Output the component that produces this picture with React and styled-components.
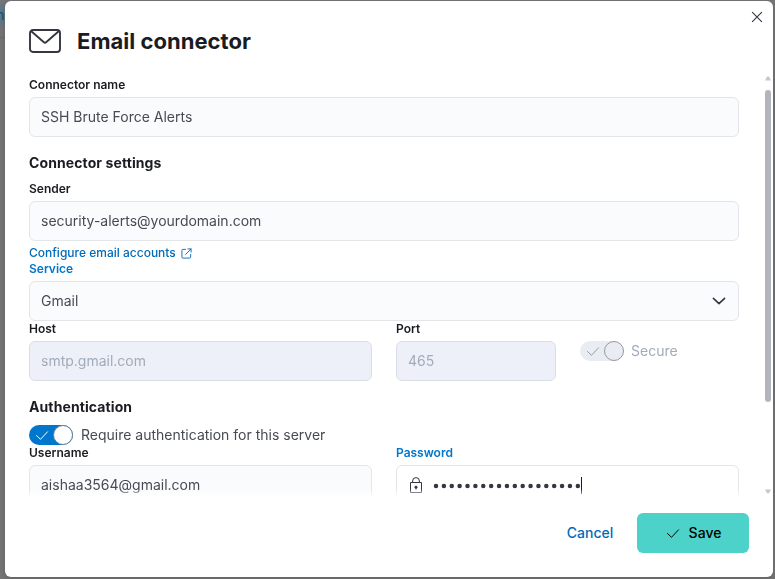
import React from 'react';
import styled, { createGlobalStyle } from 'styled-components';

const GlobalStyle = createGlobalStyle`
  * { box-sizing: border-box; }
  body {
    margin: 0;
    overflow: hidden;
    font-family: Inter, "Liberation Sans", sans-serif;
    font-size: 14px;
    color: #343741;
    background: #777778;
  }
  button, input { font: inherit; }
  h1, h2 { margin: 0; color: #1a1c21; font-weight: 700; }
`;

const Backdrop = styled.div`
  position: relative;
  width: 775px;
  height: 579px;
  padding: 1px 2px 2px 5px;
  background: #777778;
  overflow: hidden;
`;

const PageBehind = styled.div`
  position: absolute;
  left: 0;
  top: 4px;
  width: 12px;
  height: 34px;
  border-bottom: 1px solid #6c6e74;
  color: #165885;
  font-size: 14px;
  font-weight: 500;
  line-height: 21px;
  text-indent: -4px;
  background: linear-gradient(#667985 0 22px, #777778 22px);
`;

const Modal = styled.section`
  position: relative;
  display: flex;
  flex-direction: column;
  width: 768px;
  height: 576px;
  background: #fff;
  border-radius: 6px;
  box-shadow: 0 2px 8px rgba(0, 0, 0, 0.2);
`;

const Header = styled.header`
  display: flex;
  align-items: center;
  gap: 16px;
  height: 68px;
  padding: 12px 24px 0;
`;

const Title = styled.h1`
  font-size: 22px;
  line-height: 32px;
  letter-spacing: 0.03px;
`;

const CloseButton = styled.button`
  position: absolute;
  top: 4px;
  right: 4px;
  display: grid;
  place-items: center;
  width: 24px;
  height: 24px;
  padding: 0;
  border: 0;
  background: none;
  color: #343741;
`;

const Body = styled.div`
  display: flex;
  height: 428px;
`;

const Fields = styled.div`
  flex: 1;
  height: 428px;
  padding: 8px 0 0 24px;
  overflow: hidden;
  mask-image: linear-gradient(rgba(0,0,0,.1) 0, #000 7px, #000 calc(100% - 8px), rgba(0,0,0,.1) 100%);
`;

const ScrollTrack = styled.div`
  display: flex;
  flex-direction: column;
  align-items: center;
  width: 9px;
  height: 419px;
  margin: 7px 1px 0 24px;
`;

const ScrollThumb = styled.div`
  width: 6px;
  height: 312px;
  margin: 9px 0 87px;
  border-radius: 3px;
  background: #b2b5be;
`;

const Row = styled.div`
  display: flex;
  gap: 24px;
  width: 710px;
`;

const Field = styled.div`
  width: ${({ $width }) => $width || '710px'};
`;

const Label = styled.label`
  display: block;
  height: 16px;
  margin-bottom: 4px;
  font-size: 12px;
  font-weight: 600;
  line-height: 16px;
  color: ${({ $focused }) => ($focused ? '#0077cc' : '#1a1c21')};
`;

const Control = styled.div`
  display: flex;
  align-items: center;
  height: 40px;
  padding: 0 11px;
  border: 1px solid ${({ $disabled }) => ($disabled ? '#d9dde5' : '#e3e5e9')};
  border-radius: 6px;
  background: ${({ $disabled, $focused }) => ($disabled ? '#edf0f8' : $focused ? '#fff' : '#fafbfd')};
  color: ${({ $disabled }) => ($disabled ? '#a2abba' : '#474a53')};
  line-height: 20px;
`;

const Value = styled.span`
  flex: 1;
`;

const SectionTitle = styled.h2`
  height: 20px;
  margin: 16px 0 8px;
  font-size: 14px;
  line-height: 20px;
  letter-spacing: 0.1px;
`;

const HelpLink = styled.a`
  display: flex;
  align-items: center;
  gap: 5px;
  height: 16px;
  margin-top: 4px;
  color: #006bb8;
  font-size: 12px;
  font-weight: 500;
  line-height: 16px;
`;

const SwitchRow = styled.div`
  display: flex;
  align-items: center;
  gap: ${({ $disabled }) => ($disabled ? 7 : 8)}px;
  height: 20px;
  margin-top: ${({ $offset }) => $offset || 0}px;
  color: ${({ $disabled }) => ($disabled ? '#a2abba' : '#474a53')};
  line-height: 20px;
`;

const SwitchTrack = styled.span`
  display: flex;
  align-items: center;
  justify-content: space-between;
  width: 44px;
  height: 20px;
  padding-left: 5px;
  border-radius: 10px;
  color: ${({ $disabled }) => ($disabled ? '#9a9da4' : '#fff')};
  background: ${({ $disabled }) => ($disabled ? '#e9ecf3' : '#0077cc')};
`;

const SwitchThumb = styled.span`
  width: 20px;
  height: 20px;
  border: 1px solid ${({ $disabled }) => ($disabled ? '#98999d' : '#6e8298')};
  border-radius: 50%;
  background: ${({ $disabled }) => ($disabled ? '#e9ecf3' : '#fff')};
`;

const PasswordValue = styled.span`
  display: flex;
  align-items: center;
  margin-left: 9px;
  color: #343741;
`;

const Caret = styled.span`
  width: 1px;
  height: 17px;
  background: #1a1c21;
`;

const Footer = styled.footer`
  display: flex;
  justify-content: flex-end;
  align-items: center;
  height: 80px;
  padding: 0 24px 8px;
`;

const Button = styled.button`
  display: flex;
  align-items: center;
  justify-content: center;
  gap: 8px;
  height: 40px;
  border: 0;
  border-radius: 6px;
  padding: 0 0 1px;
  width: ${({ $primary }) => ($primary ? '112px' : '94px')};
  background: ${({ $primary }) => ($primary ? '#4dd2ca' : 'transparent')};
  color: ${({ $primary }) => ($primary ? '#000' : '#006bb8')};
  font-weight: 500;
  line-height: 19px;
`;

const CheckIcon = () => (
  <svg width="16" height="16" viewBox="0 0 16 16" fill="none" stroke="currentColor" strokeLinecap="round" strokeLinejoin="round">
    <path d="M2.5 8.5l4 3.8 7-7.5" />
  </svg>
);

const EmailIcon = () => (
  <svg width="32" height="24" viewBox="0 0 32 24" fill="none" stroke="#343741" strokeWidth="1.9">
    <rect x="1" y="1" width="30" height="22" rx="3" />
    <path d="M2 2l12.9 11.2q1.1 1 2.2 0L30 2" strokeLinejoin="round" />
  </svg>
);

const CloseIcon = () => (
  <svg width="16" height="16" viewBox="0 0 16 16" stroke="currentColor" strokeWidth="1.1" strokeLinecap="round">
    <path d="M3.4 3.4l9.2 9.2M12.6 3.4l-9.2 9.2" />
  </svg>
);

const ExternalIcon = () => (
  <svg width="11" height="11" viewBox="0 0 12 12" fill="none" stroke="currentColor" strokeLinecap="round" strokeLinejoin="round">
    <path d="M5 1.5H2a1 1 0 0 0-1 1V10a1 1 0 0 0 1 1h7.5a1 1 0 0 0 1-1V7M7.5 1H11v3.5M11 1L5 7" />
  </svg>
);

const ChevronIcon = () => (
  <svg width="16" height="16" viewBox="0 0 16 16" fill="none" stroke="#343741" strokeWidth="1.6" strokeLinecap="round" strokeLinejoin="round">
    <path d="M2.4 5.4L8 10.7l5.6-5.3" />
  </svg>
);

const LockIcon = () => (
  <svg width="16" height="16" viewBox="0 0 16 16" fill="none" stroke="#343741">
    <path d="M2.5 5.5h11v10h-11zM4.6 5.5V4a3.4 3.4 0 0 1 6.8 0v1.5" />
    <path d="M8 9.5v3" />
    <circle cx="8" cy="10.2" r="1.1" fill="#343741" />
  </svg>
);

const PasswordDots = () => (
  <svg width="148" height="20" viewBox="0 0 148 20" fill="currentColor">
    {Array.from({ length: 19 }, (_, i) => (
      <circle key={i} cx={3 + i * 7.88} cy="11" r="2.25" />
    ))}
  </svg>
);

const ScrollArrow = ({ down }) => (
  <svg width="6" height="5" viewBox="0 0 6 5" fill="#c5c7cf">
    <path d={down ? 'M0 .5h6L4 4.2H2z' : 'M2 .5h2l2 4H0z'} />
  </svg>
);

const Switch = ({ children, disabled, offset }) => (
  <SwitchRow $disabled={disabled} $offset={offset}>
    <SwitchTrack $disabled={disabled}>
      <CheckIcon />
      <SwitchThumb $disabled={disabled} />
    </SwitchTrack>
    {children}
  </SwitchRow>
);

const TextField = ({ label, value, width, disabled }) => (
  <Field $width={width}>
    <Label>{label}</Label>
    <Control $disabled={disabled}>{value}</Control>
  </Field>
);

export default function App() {
  return (
    <Backdrop>
      <GlobalStyle />
      <PageBehind>n</PageBehind>
      <Modal>
        <Header>
          <EmailIcon />
          <Title>Email connector</Title>
        </Header>
        <CloseButton aria-label="Close"><CloseIcon /></CloseButton>
        <Body>
          <Fields>
            <TextField label="Connector name" value="SSH Brute Force Alerts" />
            <SectionTitle>Connector settings</SectionTitle>
            <TextField label="Sender" value="security-alerts@yourdomain.com" />
            <HelpLink>Configure email accounts <ExternalIcon /></HelpLink>
            <Field>
              <Label $focused>Service</Label>
              <Control><Value>Gmail</Value><ChevronIcon /></Control>
            </Field>
            <Row>
              <TextField label="Host" value="smtp.gmail.com" width="343px" disabled />
              <TextField label="Port" value="465" width="160px" disabled />
              <Switch disabled offset={20}>Secure</Switch>
            </Row>
            <SectionTitle>Authentication</SectionTitle>
            <Switch>Require authentication for this server</Switch>
            <Row>
              <TextField label="Username" value="aishaa3564@gmail.com" width="343px" />
              <Field $width="343px">
                <Label $focused>Password</Label>
                <Control $focused>
                  <LockIcon />
                  <PasswordValue><PasswordDots /><Caret /></PasswordValue>
                </Control>
              </Field>
            </Row>
          </Fields>
          <ScrollTrack>
            <ScrollArrow />
            <ScrollThumb />
            <ScrollArrow down />
          </ScrollTrack>
        </Body>
        <Footer>
          <Button>Cancel</Button>
          <Button $primary><CheckIcon />Save</Button>
        </Footer>
      </Modal>
    </Backdrop>
  );
}
